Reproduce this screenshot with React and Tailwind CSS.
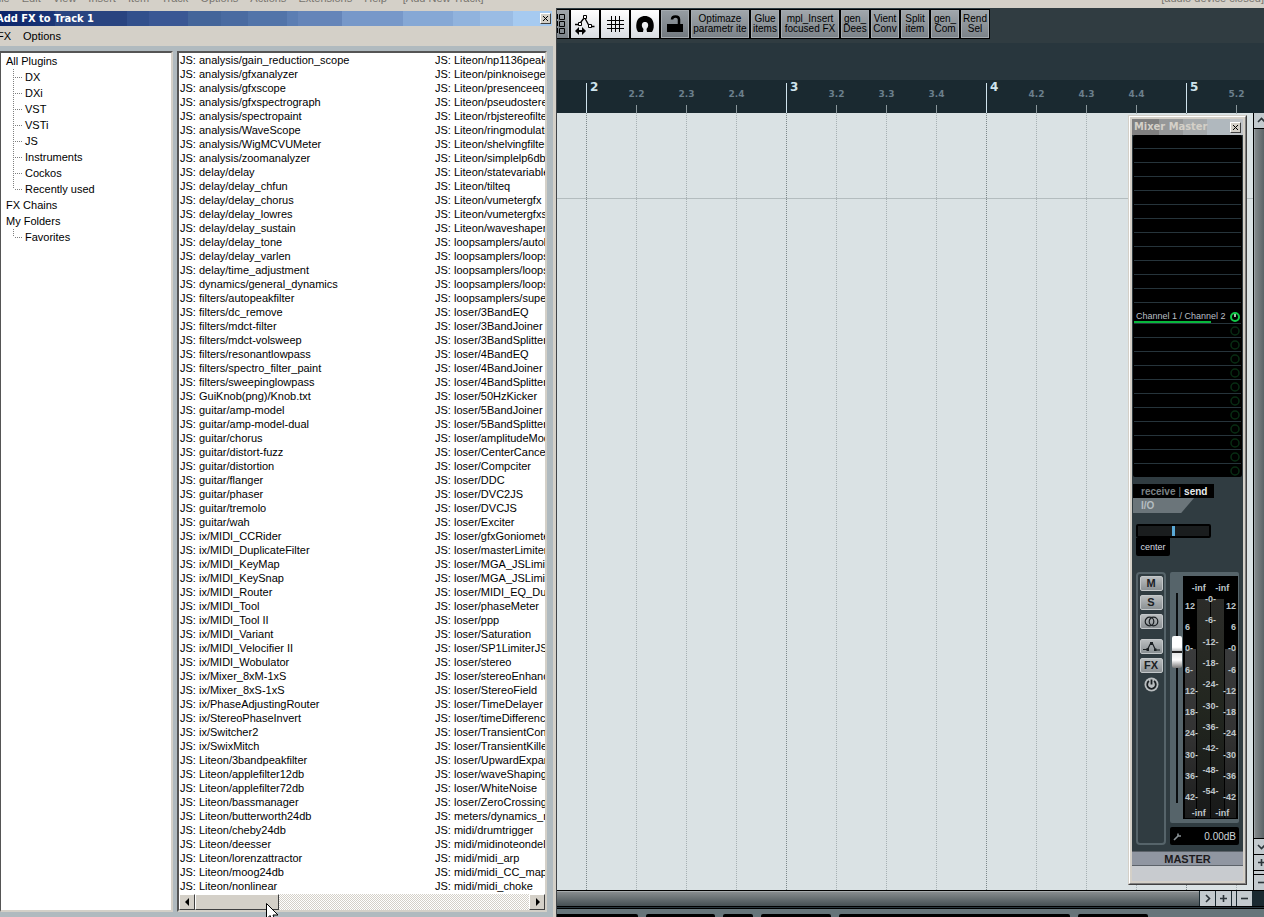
import { useState } from "react";

const menuItems = ["File", "Edit", "View", "Insert", "Item", "Track", "Options", "Actions", "Extensions", "Help"];

const pluginFolders = ["DX", "DXi", "VST", "VSTi", "JS", "Instruments", "Cockos", "Recently used"];

const pluginsLeft = [
  "analysis/gain_reduction_scope", "analysis/gfxanalyzer", "analysis/gfxscope", "analysis/gfxspectrograph",
  "analysis/spectropaint", "analysis/WaveScope", "analysis/WigMCVUMeter", "analysis/zoomanalyzer",
  "delay/delay", "delay/delay_chfun", "delay/delay_chorus", "delay/delay_lowres", "delay/delay_sustain",
  "delay/delay_tone", "delay/delay_varlen", "delay/time_adjustment", "dynamics/general_dynamics",
  "filters/autopeakfilter", "filters/dc_remove", "filters/mdct-filter", "filters/mdct-volsweep",
  "filters/resonantlowpass", "filters/spectro_filter_paint", "filters/sweepinglowpass",
  "GuiKnob(png)/Knob.txt", "guitar/amp-model", "guitar/amp-model-dual", "guitar/chorus",
  "guitar/distort-fuzz", "guitar/distortion", "guitar/flanger", "guitar/phaser", "guitar/tremolo",
  "guitar/wah", "ix/MIDI_CCRider", "ix/MIDI_DuplicateFilter", "ix/MIDI_KeyMap", "ix/MIDI_KeySnap",
  "ix/MIDI_Router", "ix/MIDI_Tool", "ix/MIDI_Tool II", "ix/MIDI_Variant", "ix/MIDI_Velocifier II",
  "ix/MIDI_Wobulator", "ix/Mixer_8xM-1xS", "ix/Mixer_8xS-1xS", "ix/PhaseAdjustingRouter",
  "ix/StereoPhaseInvert", "ix/Switcher2", "ix/SwixMitch", "Liteon/3bandpeakfilter",
  "Liteon/applefilter12db", "Liteon/applefilter72db", "Liteon/bassmanager", "Liteon/butterworth24db",
  "Liteon/cheby24db", "Liteon/deesser", "Liteon/lorenzattractor", "Liteon/moog24db", "Liteon/nonlinear"
];

const pluginsRight = [
  "Liteon/np1136peaklimiter", "Liteon/pinknoisegen", "Liteon/presenceeq", "Liteon/pseudostereo",
  "Liteon/rbjstereofilter", "Liteon/ringmodulator", "Liteon/shelvingfilter", "Liteon/simplelp6db",
  "Liteon/statevariable", "Liteon/tilteq", "Liteon/vumetergfx", "Liteon/vumetergfxsum",
  "Liteon/waveshaper", "loopsamplers/autoloop", "loopsamplers/loopsampler", "loopsamplers/loopsampler2",
  "loopsamplers/loopsampler3", "loopsamplers/super8", "loser/3BandEQ", "loser/3BandJoiner",
  "loser/3BandSplitter", "loser/4BandEQ", "loser/4BandJoiner", "loser/4BandSplitter",
  "loser/50HzKicker", "loser/5BandJoiner", "loser/5BandSplitter", "loser/amplitudeModulator",
  "loser/CenterCanceler", "loser/Compciter", "loser/DDC", "loser/DVC2JS", "loser/DVCJS",
  "loser/Exciter", "loser/gfxGoniometer", "loser/masterLimiter", "loser/MGA_JSLimiter",
  "loser/MGA_JSLimiterST", "loser/MIDI_EQ_Ducker", "loser/phaseMeter", "loser/ppp",
  "loser/Saturation", "loser/SP1LimiterJS", "loser/stereo", "loser/stereoEnhancer",
  "loser/StereoField", "loser/TimeDelayer", "loser/timeDifference", "loser/TransientController",
  "loser/TransientKiller", "loser/UpwardExpander", "loser/waveShaping", "loser/WhiteNoise",
  "loser/ZeroCrossingMax", "meters/dynamics_meter", "midi/drumtrigger", "midi/midinoteondelay",
  "midi/midi_arp", "midi/midi_CC_mapper", "midi/midi_choke"
];

const beats = ["2", "2.2", "2.3", "2.4", "3", "3.2", "3.3", "3.4", "4", "4.2", "4.3", "4.4", "5", "5.2"];

const actionButtons = [
  { lines: ["Optimaze", "parametr ite"], wide: true },
  { lines: ["Glue", "items"] },
  { lines: ["mpl_Insert", "focused FX"], wide: true },
  { lines: ["gen_", "Dees"] },
  { lines: ["Vient", "Conv"] },
  { lines: ["Split", "item"] },
  { lines: ["gen_", "Com"] },
  { lines: ["Rend", "Sel"] }
];

const peakScale = ["-0-", "-6-", "-12-", "-18-", "-24-", "-30-", "-36-", "-42-", "-48-", "-54-"];
const leftScale = ["12", "6", "0-", "6-", "12-", "18-", "24-", "30-", "36-", "42-"];
const rightScale = ["12", "6", "-0", "-6", "-12", "-18", "-24", "-30", "-36", "-42"];

function CloseButton({ label }) {
  return (
    <button
      aria-label={label}
      className="flex h-[11px] w-[11px] items-center justify-center border border-t-white border-l-white border-r-[#404040] border-b-[#404040] bg-[#d4d0c8]"
    >
      <svg width="7" height="7" viewBox="0 0 7 7" stroke="#000">
        <path d="M1 1 6 6M6 1 1 6" />
      </svg>
    </button>
  );
}

function MenuBar() {
  return (
    <header className="flex h-2 shrink-0 items-end justify-between overflow-hidden bg-[#d4d0c8] pb-[3px] text-[11px] leading-[14px] text-[#77746e]">
      <nav className="-ml-2 flex gap-3 whitespace-nowrap">
        {menuItems.map((item) => (
          <button key={item}>{item}</button>
        ))}
        <button className="ml-1">[Add New Track]</button>
      </nav>
      <span className="whitespace-nowrap">[audio device closed]</span>
    </header>
  );
}

function FxTree() {
  return (
    <div className="w-[173px] shrink-0 border-t-2 border-r-2 border-b-2 border-l border-t-[#555] border-l-[#555] border-r-[#d4d0c8] border-b-[#d4d0c8] bg-white">
      <ul className="pl-[5px] leading-4">
        <li>
          All Plugins
          <TreeBranch items={pluginFolders} />
        </li>
        <li>FX Chains</li>
        <li>
          My Folders
          <TreeBranch items={["Favorites"]} />
        </li>
      </ul>
    </div>
  );
}

function TreeBranch({ items }) {
  return (
    <ul className="pl-[7px]">
      {items.map((item) => (
        <li key={item} className="group flex h-4">
          <span className="h-4 w-px bg-[repeating-linear-gradient(to_bottom,#808080_0_1px,transparent_1px_2px)] group-last:h-2" />
          <span className="mt-2 mr-[3px] h-px w-2 bg-[repeating-linear-gradient(to_right,transparent_0_1px,#808080_1px_2px)]" />
          {item}
        </li>
      ))}
    </ul>
  );
}

function PluginColumn({ items }) {
  return (
    <ul className="w-[255px] shrink-0 whitespace-nowrap leading-[14px]">
      {items.map((item) => (
        <li key={item}>JS: {item}</li>
      ))}
    </ul>
  );
}

function ScrollArrow({ label, points }) {
  return (
    <button
      aria-label={label}
      className="flex w-4 items-center justify-center border border-t-white border-l-white border-r-[#404040] border-b-[#404040] bg-[#d4d0c8]"
    >
      <svg width="5" height="8" viewBox="0 0 5 8">
        <polygon points={points} fill="#000" />
      </svg>
    </button>
  );
}

function FxWindow() {
  return (
    <section className="relative flex w-[557px] shrink-0 flex-col border-r border-r-[#404448] bg-[#d4d0c8] text-[11px] text-black">
      <div className="mt-[3px] mr-1 flex h-[15px] items-center justify-between overflow-hidden bg-[linear-gradient(to_right,#0a246a_0,#1b3677_10%,#294480_10%_23%,#32508c_23%_27%,#3a5794_27%_34%,#44659a_34%_40%,#4a6ba1_40%_45%,#5274a9_45%_52%,#5c7eb3_52%_54%,#6585b9_54%_62%,#7798c9_62%_73%,#86a8d5_73%_82%,#91b3dd_82%_87%,#9abce4_87%_93%,#a6caf0_93%)] pr-px">
        <h1 className="-ml-1 font-['DejaVu_Sans_Condensed','DejaVu_Sans',sans-serif] text-[11px] font-bold leading-[15px] text-white">
          Add FX to Track 1
        </h1>
        <CloseButton label="Close Add FX" />
      </div>
      <nav className="-ml-[3px] flex h-5 items-center gap-3">
        <button>FX</button>
        <button>Options</button>
      </nav>
      <div className="mr-[3px] flex min-h-0 flex-1 gap-1 bg-[#b0babf] pt-[5px] pr-[6px] pb-[5px]">
        <FxTree />
        <div className="flex min-w-0 flex-1 flex-col border-2 border-t-[#555] border-l-[#555] border-r-[#d4d0c8] border-b-[#d4d0c8] bg-white">
          <div className="flex min-h-0 flex-1 overflow-hidden pl-px">
            <PluginColumn items={pluginsLeft} />
            <PluginColumn items={pluginsRight} />
          </div>
          <div className="flex h-4 shrink-0 bg-[repeating-conic-gradient(#d4d0c8_0_25%,#fff_0_50%)] bg-[length:2px_2px]">
            <ScrollArrow label="Scroll left" points="4,0 4,8 0,4" />
            <div className="w-[84px] border border-t-white border-l-white border-r-[#404040] border-b-[#404040] bg-[#d4d0c8]" />
            <div className="flex-1" />
            <ScrollArrow label="Scroll right" points="1,0 1,8 5,4" />
          </div>
        </div>
      </div>
      <svg className="absolute bottom-0 left-[266px]" width="13" height="14" viewBox="0 0 13 14">
        <path d="M.5.5V16l3.5-3.5L6 17h3l-2-5h5Z" fill="#fff" stroke="#000" />
      </svg>
    </section>
  );
}

function ToolButton({ label, lit, children }) {
  return (
    <button
      aria-label={label}
      className={
        lit
          ? "flex h-7 w-7 items-center justify-center bg-linear-to-b from-white to-[#d9dde2]"
          : "flex h-7 w-7 items-center justify-center border border-[#a5abb0] bg-linear-to-b from-[#959ca2] to-[#737a80]"
      }
    >
      {children}
    </button>
  );
}

function Toolbar() {
  return (
    <div className="flex h-[35px] shrink-0 items-start bg-[#303c41] pt-px">
      <div className="flex gap-[2px] bg-black py-px pr-px">
        <button aria-label="Grouping" className="flex h-7 w-3 items-center border-r border-[#a5abb0] bg-linear-to-b from-[#a0a6ab] to-[#7c8389]">
          <svg width="9" height="22" viewBox="0 0 9 22" fill="none" stroke="#000">
            <path d="M2.5 1.5h5v5h-5zM2.5 8.5h5v5h-5zM2.5 15.5h5v5h-5zM0.5 1v5M0.5 8v5M0.5 15v5" />
          </svg>
        </button>
        <ToolButton label="Move envelope points with items" lit>
          <svg width="22" height="22" viewBox="0 0 22 22" fill="none" stroke="#000">
            <path d="M1 11.500h4l5.500-7 5 9h5" strokeWidth="1.3" />
            <path d="M4.500 9.500h3v3h-3zM9.500 2.500h3v3h-3zM14.500 11.500h3v3h-3z" fill="#fff" />
            <path d="M3 18h7" strokeWidth="2" />
            <path d="M5 14v8L1 18zM8 14v8l4-4z" fill="#000" stroke="none" />
          </svg>
        </ToolButton>
        <ToolButton label="Grid lines" lit>
          <svg width="18" height="18" viewBox="0 0 18 18" stroke="#000">
            <path d="M5.500 1v16M9.500 1v16M13.500 1v16M1 5.500h17M1 9.500h17M1 13.500h17" />
          </svg>
        </ToolButton>
        <ToolButton label="Snap" lit>
          <svg width="20" height="18" viewBox="0 0 20 18">
            <path d="M3 17C1 14 1 11 1.500 8 2.500 3 6 1 10 1s7.500 2 8.500 7c.5 3 .5 6-1.500 9h-5l-.5-3c1.500-2 2-3 1.500-5-.5-1.500-1.500-2-3-2s-2.500.5-3 2c-.5 2 0 3 1.500 5L8 17Z" fill="#000" />
          </svg>
        </ToolButton>
        <ToolButton label="Lock">
          <svg width="18" height="20" viewBox="0 0 18 20">
            <path d="M1 10h16v8H1z" fill="#000" />
            <path d="M13 10V5.500C13 1.500 6 1.500 6 5.500" fill="none" stroke="#000" strokeWidth="2.500" />
          </svg>
        </ToolButton>
        {actionButtons.map((action) => (
          <button
            key={action.lines.join(" ")}
            className={
              (action.wide ? "w-[58px]" : "w-7") +
              " flex h-7 flex-col items-center justify-center border border-[#a5abb0] bg-linear-to-b from-[#a0a6ab] to-[#7c8389] text-[10px] leading-[10px] whitespace-nowrap text-black"
            }
          >
            <span>{action.lines[0]}</span>
            <span>{action.lines[1]}</span>
          </button>
        ))}
      </div>
    </div>
  );
}

function Ruler() {
  return (
    <div className="flex h-[33px] shrink-0 overflow-hidden bg-[#1a2930] pl-1 font-['DejaVu_Sans',sans-serif] font-bold">
      {beats.map((beat) =>
        beat.length === 1 ? (
          <div key={beat} className="flex w-[50px] shrink-0 pt-[3px] pl-[25px]">
            <span className="w-px bg-[#cfe3ec]" />
            <span className="-mt-[3px] pl-[3px] text-[12px] leading-[14px] text-[#cfe3ec]">{beat}</span>
          </div>
        ) : (
          <div key={beat} className="-mr-px flex w-[51px] shrink-0 flex-col items-center justify-end">
            <span className="text-[9px] leading-[22px] text-[#6b7f8c]">{beat}</span>
            <span className="h-2 w-px bg-[#8a979c]" />
          </div>
        )
      )}
    </div>
  );
}

function Arrange() {
  return (
    <div className="relative flex min-w-0 flex-1 flex-col overflow-hidden bg-[#dae2e4]">
      <div className="h-[86px] shrink-0 border-b border-[#b3bcbe]" />
      <div className="absolute inset-0 flex gap-[49px] pl-[29px]">
        {beats.map((beat) => (
          <span
            key={beat}
            className={
              beat.length === 1
                ? "w-px shrink-0 bg-[repeating-linear-gradient(to_bottom,#7d888b_0_1px,transparent_1px_2px)]"
                : "w-px shrink-0 bg-[repeating-linear-gradient(to_bottom,#a6b0b3_0_1px,transparent_1px_2px)]"
            }
          />
        ))}
      </div>
    </div>
  );
}

function SmallButton({ label, path }) {
  return (
    <button aria-label={label} className="flex h-[15px] w-[15px] shrink-0 items-center justify-center bg-[#c3cace]">
      <svg width="9" height="9" viewBox="0 0 9 9" fill="none" stroke="#2b3338" strokeWidth="1.600">
        <path d={path} />
      </svg>
    </button>
  );
}

function Workspace() {
  return (
    <main className="flex min-w-0 flex-1 flex-col bg-[#28363d]">
      <Toolbar />
      <div className="h-[37px] shrink-0" />
      <Ruler />
      <div className="flex min-h-0 flex-1">
        <Arrange />
        <div className="flex w-[11px] shrink-0 flex-col gap-px overflow-hidden border-l border-black bg-black">
          <SmallButton label="Scroll up" path="M1 6l3.500-3.500L8 6" />
          <div className="w-[15px] flex-1 border-l border-[#9aa2a6] bg-linear-to-r from-[#84898b] to-[#464f53]" />
          <SmallButton label="Scroll down" path="M1 3l3.500 3.500L8 3" />
          <SmallButton label="Zoom in vertically" path="M4.500 1v7M1 4.500h7" />
          <div className="h-[3px] shrink-0 bg-[#c3cace]" />
          <SmallButton label="Zoom out vertically" path="M1 4.500h7" />
        </div>
      </div>
      <div className="flex h-[17px] shrink-0 gap-px border-y border-black bg-[#1a2930] pr-3">
        <div className="flex-1 border-t border-[#a5aaac] bg-linear-to-b from-[#878c8e] to-[#465054]" />
        <SmallButton label="Scroll right" path="M3 1l3.500 3.500L3 8" />
        <SmallButton label="Zoom in" path="M4.500 1v7M1 4.500h7" />
        <div className="w-1 bg-[#c3cace]" />
        <SmallButton label="Zoom out" path="M1 4.500h7" />
      </div>
      <footer className="mt-px flex h-[9px] shrink-0 gap-2 border-t border-black bg-[#66757a] pt-[5px]">
        <span className="w-[81px] rounded-tr-xs bg-black" />
        <span className="w-[69px] rounded-t-xs bg-black" />
        <span className="w-[30px] rounded-t-xs bg-black" />
        <span className="w-[70px] rounded-t-xs bg-black" />
        <span className="w-[231px] rounded-t-xs bg-black" />
        <span className="w-[70px] rounded-t-xs bg-black" />
      </footer>
    </main>
  );
}

function StripButton({ label, children }) {
  return (
    <button
      aria-label={label}
      className="flex h-[15px] w-[23px] items-center justify-center rounded-xs border border-[#c4c8ca] bg-linear-to-b from-[#b9bdbf] to-[#8b9194] text-[11px] font-bold leading-none text-[#1b2023]"
    >
      {children}
    </button>
  );
}

function SendSlots() {
  return (
    <div className="mx-px h-[342px] shrink-0 rounded-xs bg-black px-px">
      {Array.from({ length: 12 }, (_, i) => (
        <div key={i} className="h-[14px] border-b border-[#26343b]" />
      ))}
      <div className="flex h-[21px] items-center justify-between border-b border-[#26343b] pt-2 pr-px">
        <span className="h-3 w-[95px] overflow-hidden bg-[linear-gradient(#08b83c,#08b83c)] bg-[length:77px_2px] bg-bottom-left bg-no-repeat pl-[2px] text-[9px] leading-[11px] whitespace-nowrap text-[#b8bfc3]">
          Channel 1 / Channel 2
        </span>
        <SlotKnob active />
      </div>
      {Array.from({ length: 11 }, (_, i) => (
        <div key={i} className="flex h-[14px] items-center justify-end border-b border-[#26343b] pr-px last:border-b-0">
          <SlotKnob />
        </div>
      ))}
    </div>
  );
}

function SlotKnob({ active }) {
  return (
    <svg className="shrink-0" width="10" height="10" viewBox="0 0 10 10" fill="none">
      <circle cx="5" cy="5" r="4" stroke={active ? "#10c848" : "#082c13"} strokeWidth={active ? 2 : 1.5} />
      {active && <path d="M5 2v3" stroke="#d8ffe2" strokeWidth="1.500" />}
    </svg>
  );
}

function Scale({ values, className }) {
  return (
    <div className={"flex flex-col justify-between " + className}>
      {values.map((value) => (
        <span key={value}>{value}</span>
      ))}
    </div>
  );
}

function Meter() {
  return (
    <div className="relative flex w-[55px] flex-col bg-black text-[9px] font-bold leading-[10px] text-[#bfc6ca]">
      <div className="absolute inset-x-[2px] top-[23px] bottom-px flex gap-px">
        <span className="mt-[50px] w-[11px] bg-linear-to-b from-[#3a3b3c] via-[#333] to-[#1c1d1d]" />
        <span className="flex-1 bg-linear-to-b from-[#2c2c29] via-[#22261f] to-[#181919]" />
        <span className="flex-1 bg-linear-to-b from-[#2c2c29] via-[#22261f] to-[#181919]" />
        <span className="mt-[50px] w-[11px] bg-linear-to-b from-[#3a3b3c] via-[#333] to-[#1c1d1d]" />
      </div>
      <div className="relative flex justify-around px-1 pt-[7px]">
        <span>-inf</span>
        <span>-inf</span>
      </div>
      <div className="relative flex min-h-0 flex-1 justify-between px-[2px] pt-px">
        <Scale values={leftScale} className="pt-[7px]" />
        <Scale values={peakScale} className="absolute inset-x-0 top-px bottom-[6px] items-center" />
        <Scale values={rightScale} className="items-end pt-[7px]" />
      </div>
      <div className="relative flex justify-around px-1 pt-[6px] pb-px">
        <span>-inf</span>
        <span>-inf</span>
      </div>
    </div>
  );
}

function MixerWindow() {
  const [pan, setPan] = useState(50);
  const [volume, setVolume] = useState(78);

  return (
    <section className="absolute top-[115px] right-[17px] bottom-[32px] flex w-[119px] flex-col border border-t-[#d4d0c8] border-l-[#d4d0c8] border-r-[#404040] border-b-[#404040] bg-[#d4d0c8]">
      <div className="flex min-h-0 flex-1 flex-col border border-t-white border-l-white border-r-[#808080] border-b-[#808080] p-[2px]">
        <div className="flex h-4 shrink-0 items-center justify-between bg-[linear-gradient(to_right,#808080_0_24%,#969899_24%_46%,#a5a9ab_46%_68%,#b0b8be_68%_88%,#c0c4c8_88%)] px-[2px]">
          <h2 className="font-['DejaVu_Sans_Condensed','DejaVu_Sans',sans-serif] text-[11px] font-bold whitespace-nowrap text-[#d4d0c8]">
            Mixer Master
          </h2>
          <CloseButton label="Close mixer" />
        </div>
        <div className="flex min-h-0 flex-1 flex-col bg-[#303c41]">
          <SendSlots />
          <div className="mt-[7px] ml-px flex h-[14px] w-[81px] shrink-0 items-center gap-[3px] bg-black pl-2 text-[10px] font-bold">
            <button className="text-[#7b8285]">receive</button>
            <span className="font-normal text-[#7b8285]">|</span>
            <button className="text-[#e8ecee]">send</button>
          </div>
          <button className="ml-px h-[15px] w-[61px] shrink-0 bg-[#6b757a] pl-2 text-left text-[10px] font-bold leading-[15px] text-[#b5bdc1] [clip-path:polygon(0_0,100%_0,79%_100%,0_100%)]">
            I/O
          </button>
          <input
            type="range"
            aria-label="Pan"
            value={pan}
            onChange={(e) => setPan(e.target.value)}
            className="mt-[11px] ml-1 h-[14px] w-[75px] shrink-0 appearance-none rounded-xs border-2 border-black bg-[#1a1d1e] [&::-webkit-slider-thumb]:h-[10px] [&::-webkit-slider-thumb]:w-[3px] [&::-webkit-slider-thumb]:appearance-none [&::-webkit-slider-thumb]:bg-[#5aa9d6]"
          />
          <span className="ml-1 h-[18px] w-[34px] shrink-0 rounded-b-xs bg-black text-center text-[9px] leading-[18px] text-[#d7dde0]">
            center
          </span>
          <div className="mt-4 flex min-h-0 flex-1 gap-1 px-1">
            <div className="flex w-[30px] flex-col items-center rounded-sm border-2 border-[#56646a] pt-[2px]">
              <div className="flex flex-col gap-1">
                <StripButton>M</StripButton>
                <StripButton>S</StripButton>
                <StripButton label="Mono">
                  <svg width="15" height="11" viewBox="0 0 15 11" fill="none" stroke="#1b2023" strokeWidth="1.200">
                    <circle cx="5.500" cy="5.500" r="4.300" />
                    <circle cx="9.500" cy="5.500" r="4.300" />
                  </svg>
                </StripButton>
              </div>
              <div className="mt-[10px] flex flex-col items-center gap-1">
                <StripButton label="Envelopes">
                  <svg width="19" height="11" viewBox="0 0 19 11" fill="none" stroke="#1b2023">
                    <path d="M1 8.500h4.500l3-6h2l3 6.500H18" strokeWidth="1.200" />
                    <path d="M4.500 7h2.500v3h-2.500zM8 1h3v3H8zM12 7.500h2.500v2.500h-2.500z" fill="#1b2023" stroke="none" />
                  </svg>
                </StripButton>
                <StripButton>FX</StripButton>
                <button aria-label="Bypass effects">
                  <svg width="15" height="15" viewBox="0 0 15 15" fill="none">
                    <circle cx="7.500" cy="7.500" r="7" fill="#b9bdbf" />
                    <path d="M5 4a4.300 4.300 0 1 0 5 0M7.500 2.500v5" stroke="#1b2023" strokeWidth="1.800" />
                  </svg>
                </button>
              </div>
            </div>
            <div className="flex min-w-0 flex-1 flex-col gap-1">
              <div className="flex min-h-0 flex-1 gap-px rounded-xs bg-[#56646a] py-1 pr-[3px]">
                <div className="flex w-3 bg-[linear-gradient(#0b0e10,#0b0e10)] bg-[length:2px_210px] bg-[position:6px_17px] bg-no-repeat">
                  <input
                    type="range"
                    aria-label="Master volume"
                    value={volume}
                    onChange={(e) => setVolume(e.target.value)}
                    className="mt-5 mb-2 ml-px w-[11px] appearance-none bg-transparent [direction:rtl] [writing-mode:vertical-lr] [&::-webkit-slider-thumb]:h-[32px] [&::-webkit-slider-thumb]:w-[10px] [&::-webkit-slider-thumb]:appearance-none [&::-webkit-slider-thumb]:rounded-xs [&::-webkit-slider-thumb]:bg-[linear-gradient(#fff_0_35%,#b8bcbe_48%,#222_48%_52%,#e4e6e7_52%,#fff_75%,#777)]"
                  />
                </div>
                <div className="flex flex-1 justify-end">
                  <Meter />
                </div>
              </div>
              <div className="flex h-[18px] shrink-0 items-center justify-between rounded-xs bg-black px-[3px] text-[10px] text-[#cfd5d8]">
                <svg width="9" height="9" viewBox="0 0 9 9" fill="none" stroke="#8a9296" strokeWidth="1.600">
                  <path d="M1 8l4.500-4.500M5 1.500v2.500h3" />
                </svg>
                0.00dB
              </div>
            </div>
          </div>
          <div className="mt-[6px] h-[15px] shrink-0 border-y border-[#5c6269] bg-[#9096a1] text-center text-[11px] font-bold leading-[14px] text-[#1d1a1c]">
            MASTER
          </div>
          <div className="h-[15px] shrink-0 bg-[#c8cbcf]" />
        </div>
      </div>
    </section>
  );
}

export default function App() {
  return (
    <div className="relative flex h-screen flex-col overflow-hidden bg-[#d4d0c8] font-['Liberation_Sans',Arial,sans-serif]">
      <MenuBar />
      <div className="flex min-h-0 flex-1">
        <FxWindow />
        <Workspace />
      </div>
      <MixerWindow />
    </div>
  );
}
